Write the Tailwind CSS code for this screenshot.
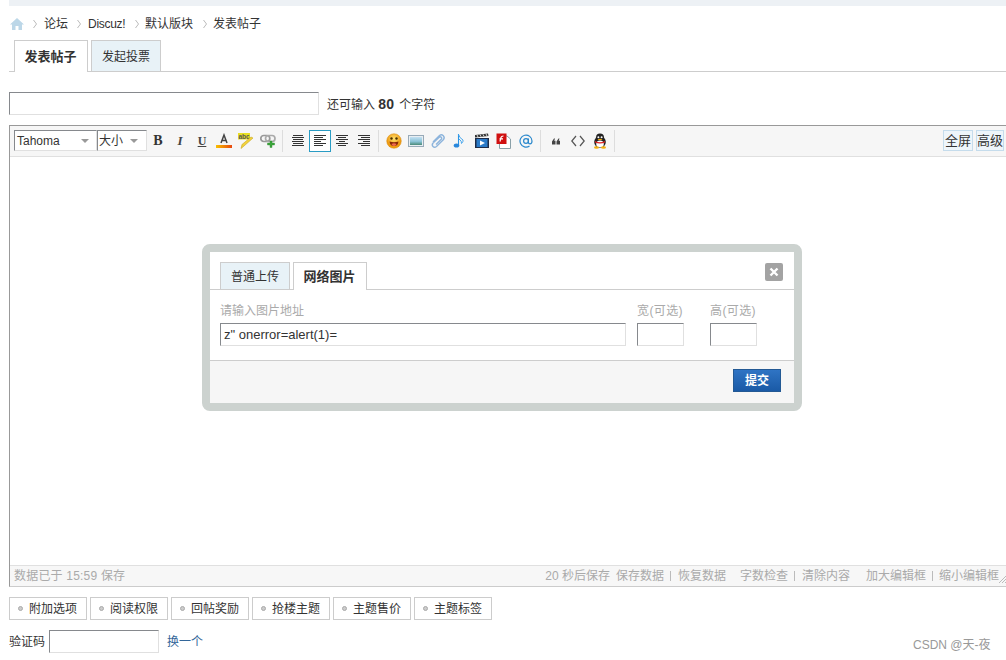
<!DOCTYPE html>
<html lang="zh">
<head>
<meta charset="utf-8">
<script src="https://cdn.jsdelivr.net/npm/@tailwindcss/browser@4"></script>
</head>
<body class="bg-white">
<div class="relative w-[1006px] h-[660px] overflow-hidden bg-white text-[12px] leading-[14px] text-[#333] font-['Liberation_Sans','Noto_Sans_CJK_SC',sans-serif]">

  <!-- top strip -->
  <div class="ml-[9px] h-[6px] bg-[#edf1f5]"></div>

  <!-- breadcrumb -->
  <div class="flex items-center h-[34px] pl-[10px] pt-[2px]">
    <svg class="w-[14px] h-[14px]" viewBox="0 0 14 14"><path d="M7 1 L14 7.5 L12 7.5 L12 13 L8.5 13 L8.5 9 L5.5 9 L5.5 13 L2 13 L2 7.5 L0 7.5 Z" fill="#bcd7e8"/></svg>
    <svg class="ml-[9px] mr-[7px] w-[4px] h-[10px]" viewBox="0 0 4 10"><path d="M0.5 1 L3.5 5 L0.5 9" fill="none" stroke="#bbb"/></svg>
    <span>论坛</span>
    <svg class="ml-[9px] mr-[7px] w-[4px] h-[10px]" viewBox="0 0 4 10"><path d="M0.5 1 L3.5 5 L0.5 9" fill="none" stroke="#bbb"/></svg>
    <span class="w-[37px] tracking-[-0.3px]">Discuz!</span>
    <svg class="ml-[10px] mr-[6px] w-[4px] h-[10px]" viewBox="0 0 4 10"><path d="M0.5 1 L3.5 5 L0.5 9" fill="none" stroke="#bbb"/></svg>
    <span>默认版块</span>
    <svg class="ml-[10px] mr-[6px] w-[4px] h-[10px]" viewBox="0 0 4 10"><path d="M0.5 1 L3.5 5 L0.5 9" fill="none" stroke="#bbb"/></svg>
    <span>发表帖子</span>
  </div>

  <!-- tabs -->
  <div class="ml-[9px] flex h-[32px] pl-[5px] gap-[3px] border-b border-[#cdcdcd]">
    <div class="w-[74px] h-[32px] flex items-center justify-center pt-[1px] pr-[1px] bg-white border border-b-0 border-[#cdcdcd] font-bold text-[13px]">发表帖子</div>
    <div class="w-[70px] h-[31px] flex items-center justify-center pt-[1px] bg-[#e8f2f7] border border-b-0 border-[#cdcdcd]">发起投票</div>
  </div>

  <!-- title -->
  <div class="flex items-center ml-[9px] mt-[20px] h-[23px] gap-[8px]">
    <div class="w-[310px] h-[23px] bg-white border border-t-[#86898d] border-l-[#86898d] border-r-[#e0e0e0] border-b-[#e0e0e0]"></div>
    <span class="mt-[2px]">还可输入 <b class="text-[14px] mr-[2px]">80</b> 个字符</span>
  </div>

  <!-- editor -->
  <div class="ml-[9px] mt-[10px] w-[1000px] h-[462px] flex flex-col border border-[#999] border-b-[#ccc] border-r-0">
    <!-- toolbar -->
    <div class="h-[31px] shrink-0 bg-[#f6f6f6] border-b border-[#e0e0e0] flex items-start pt-[4px] pl-[4px] pr-[5px]">
      <div class="w-[83px] h-[21px] flex items-center justify-between pl-[2px] pr-[7px] bg-white border border-t-[#86898d] border-l-[#86898d] border-r-[#e0e0e0] border-b-[#e0e0e0]">
        <span>Tahoma</span>
        <svg class="w-[8px] h-[4px]" viewBox="0 0 8 4"><path d="M0 0 H8 L4 4 Z" fill="#999"/></svg>
      </div>
      <div class="w-[50px] h-[21px] flex items-center justify-between pl-[1px] pr-[8px] bg-white border border-t-[#86898d] border-l-[#86898d] border-r-[#e0e0e0] border-b-[#e0e0e0]">
        <span>大小</span>
        <svg class="w-[8px] h-[4px]" viewBox="0 0 8 4"><path d="M0 0 H8 L4 4 Z" fill="#999"/></svg>
      </div>
      <!-- B I U A abc link -->
      <div class="w-[22px] h-[22px] flex items-center justify-center font-['Liberation_Serif',serif] font-bold text-[14px] text-[#333]">B</div>
      <div class="w-[22px] h-[22px] flex items-center justify-center font-['Liberation_Serif',serif] font-bold italic text-[13px] text-[#444]">I</div>
      <div class="w-[22px] h-[22px] flex items-center justify-center font-['Liberation_Serif',serif] font-bold underline text-[12px] text-[#444]">U</div>
      <div class="w-[22px] h-[22px] flex items-center justify-center">
        <svg class="w-[16px] h-[16px]" viewBox="0 0 16 16"><path d="M5 10 L8 2 L11 10 M6.2 7.5 H9.8" fill="none" stroke="#444" stroke-width="1.5"/><defs><linearGradient id="ga" x1="0" x2="1"><stop offset="0" stop-color="#f8c000"/><stop offset="1" stop-color="#e84810"/></linearGradient></defs><rect x="0" y="12" width="16" height="3" fill="url(#ga)"/></svg>
      </div>
      <div class="w-[22px] h-[22px] flex items-center justify-center">
        <svg class="w-[16px] h-[16px]" viewBox="0 0 16 16"><rect x="0" y="0" width="12" height="6.5" fill="#e8e020"/><text x="0.5" y="5.7" font-size="6.5" font-weight="bold" fill="#555" font-family="Liberation Sans">abc</text><path d="M15 5 L6 13 L3 15.5 L4 11.5 L13 4 Z" fill="#f2d23c" stroke="#c8a820" stroke-width="0.6"/></svg>
      </div>
      <div class="w-[22px] h-[22px] flex items-center justify-center">
        <svg class="w-[16px] h-[16px]" viewBox="0 0 16 16"><rect x="0.8" y="2.5" width="9" height="6" rx="3" fill="none" stroke="#999" stroke-width="1.7"/><rect x="5.5" y="2.5" width="9.5" height="6" rx="3" fill="none" stroke="#aaa" stroke-width="1.7"/><path d="M10 8 H12 V10 H14.5 V12 H12 V14.5 H10 V12 H7.5 V10 H10 Z" fill="#3aa53a" stroke="#2d8a2d" stroke-width="0.4"/></svg>
      </div>
      <div class="w-px h-[22px] bg-[#ddd] ml-[3px] mr-[4px]"></div>
      <!-- alignment -->
      <div class="w-[22px] h-[22px] flex items-center justify-center">
        <svg class="w-[14px] h-[14px]" viewBox="0 0 14 14"><path d="M2 1.5H12 M1 3.5H13 M2 5.5H12 M1 7.5H13 M2 9.5H12 M1 11.5H13" stroke="#333"/></svg>
      </div>
      <div class="w-[22px] h-[22px] flex items-center justify-center border border-[#2a9cc4] bg-white">
        <svg class="w-[14px] h-[14px]" viewBox="0 0 14 14"><path d="M1 1.5H13 M1 3.5H10 M1 5.5H13 M1 7.5H8 M1 9.5H13 M1 11.5H10" stroke="#333"/></svg>
      </div>
      <div class="w-[22px] h-[22px] flex items-center justify-center">
        <svg class="w-[14px] h-[14px]" viewBox="0 0 14 14"><path d="M1 1.5H13 M3 3.5H11 M1 5.5H13 M4 7.5H10 M1 9.5H13 M3 11.5H11" stroke="#333"/></svg>
      </div>
      <div class="w-[22px] h-[22px] flex items-center justify-center">
        <svg class="w-[14px] h-[14px]" viewBox="0 0 14 14"><path d="M1 1.5H13 M4 3.5H13 M1 5.5H13 M6 7.5H13 M1 9.5H13 M4 11.5H13" stroke="#333"/></svg>
      </div>
      <div class="w-px h-[22px] bg-[#ddd] ml-[3px] mr-[4px]"></div>
      <!-- smile -->
      <div class="w-[22px] h-[22px] flex items-center justify-center">
        <svg class="w-[16px] h-[16px]" viewBox="0 0 16 16"><defs><radialGradient id="gs" cx="0.5" cy="0.35"><stop offset="0" stop-color="#ffe070"/><stop offset="1" stop-color="#ee9a10"/></radialGradient></defs><circle cx="8" cy="8" r="7.3" fill="url(#gs)" stroke="#d88a10" stroke-width="0.5"/><circle cx="5.5" cy="5.5" r="1.2" fill="#4a3000"/><circle cx="10.5" cy="5.5" r="1.2" fill="#4a3000"/><path d="M3.5 8.5 Q8 10 12.5 8.5 Q12 13 8 13 Q4 13 3.5 8.5Z" fill="#8a2808"/><path d="M5.5 11 Q8 9.5 10.5 11 Q10 13 8 13 Q6 13 5.5 11Z" fill="#f06a50"/></svg>
      </div>
      <!-- image -->
      <div class="w-[22px] h-[22px] flex items-center justify-center">
        <svg class="w-[16px] h-[14px]" viewBox="0 0 16 14"><defs><linearGradient id="gi" x1="0" y1="0" x2="0" y2="1"><stop offset="0" stop-color="#c4e0f2"/><stop offset="0.55" stop-color="#8cc4d8"/><stop offset="1" stop-color="#4a8a78"/></linearGradient></defs><rect x="0.5" y="1.5" width="15" height="11" fill="#e8eef2" stroke="#98aab8"/><rect x="2" y="3" width="12" height="8" fill="url(#gi)"/></svg>
      </div>
      <!-- clip -->
      <div class="w-[22px] h-[22px] flex items-center justify-center">
        <svg class="w-[16px] h-[16px]" viewBox="0 0 16 16"><path d="M3 9 L9.5 2.5 Q11.5 1 13.3 2.7 Q15 4.5 13.5 6.5 L6.5 13.5 Q4.5 15 3 13.5 Q1.5 12 3 10 L9.5 4 Q10.5 3.5 11.5 4.5 Q12 5.5 11.5 6 L6 11.5" fill="none" stroke="#8db4dc" stroke-width="1.4"/></svg>
      </div>
      <!-- music -->
      <div class="w-[22px] h-[22px] flex items-center justify-center">
        <svg class="w-[16px] h-[16px]" viewBox="0 0 16 16"><path d="M6.5 1 V12" stroke="#2a94e4" stroke-width="1.1"/><ellipse cx="4.5" cy="12.5" rx="2.8" ry="2.1" fill="#2a88dc"/><path d="M6.5 1.5 Q7.5 5 11 7 Q11.5 8.5 9.5 10.5 Q10 8 7 6" fill="none" stroke="#4aa8ee" stroke-width="1"/></svg>
      </div>
      <!-- movie -->
      <div class="w-[22px] h-[22px] flex items-center justify-center">
        <svg class="w-[16px] h-[16px]" viewBox="0 0 16 16"><path d="M1 2 L14 0.5 L14.5 3 L1 4.5 Z" fill="#333"/><path d="M3 2 L4 4 M6 1.6 L7 3.7 M9 1.3 L10 3.3 M12 1 L13 3" stroke="#fff" stroke-width="0.8"/><rect x="1" y="5" width="14" height="10" fill="#1e2c48"/><rect x="2.5" y="6" width="11" height="8" fill="#2a7ac8"/><path d="M6 7.5 L11 10 L6 12.5Z" fill="#fff"/></svg>
      </div>
      <!-- flash -->
      <div class="w-[22px] h-[22px] flex items-center justify-center">
        <svg class="w-[16px] h-[16px]" viewBox="0 0 16 16"><path d="M3.5 3 H11 L14.5 6 V15.5 H3.5Z" fill="#fff" stroke="#8aa0a8"/><rect x="0.5" y="0.5" width="10" height="10.5" fill="#d01010"/><path d="M7.5 3 Q5 3 4.7 5.5 L4 8.5 M3.5 5.8 H7" fill="none" stroke="#fff" stroke-width="1.2"/></svg>
      </div>
      <!-- at -->
      <div class="w-[22px] h-[22px] flex items-center justify-center">
        <svg class="w-[14px] h-[14px]" viewBox="0 0 14 14"><circle cx="7" cy="7" r="2.4" fill="none" stroke="#2a88cc" stroke-width="1.2"/><path d="M9.4 4.5 V8.2 Q9.4 9.8 11 9.8 Q13 9.8 13 7 A6 6 0 1 0 10.5 12" fill="none" stroke="#2a88cc" stroke-width="1.2"/></svg>
      </div>
      <div class="w-px h-[22px] bg-[#ddd] ml-[3px] mr-[4px]"></div>
      <!-- quote -->
      <div class="w-[22px] h-[22px] flex items-center justify-center">
        <svg class="w-[8px] h-[7px]" viewBox="0 0 8 7"><path d="M0 6.5 V3.5 L2 0.5 H3 L2.2 2.8 H3.5 V6.5Z M4.5 6.5 V3.5 L6.5 0.5 H7.5 L6.7 2.8 H8 V6.5Z" fill="#444"/></svg>
      </div>
      <!-- code -->
      <div class="w-[22px] h-[22px] flex items-center justify-center">
        <svg class="w-[14px] h-[12px]" viewBox="0 0 14 12"><path d="M5 1 L0.8 6 L5 11 M9 1 L13.2 6 L9 11" fill="none" stroke="#555" stroke-width="1.2"/></svg>
      </div>
      <!-- qq -->
      <div class="w-[22px] h-[22px] flex items-center justify-center">
        <svg class="w-[16px] h-[16px]" viewBox="0 0 16 16"><ellipse cx="8" cy="9" rx="5.8" ry="6" fill="#222"/><ellipse cx="8" cy="4.8" rx="4" ry="4.2" fill="#222"/><ellipse cx="8" cy="11" rx="3.8" ry="3.6" fill="#fff"/><circle cx="6.4" cy="4.2" r="1" fill="#fff"/><circle cx="9.6" cy="4.2" r="1" fill="#fff"/><path d="M5.5 6.2 Q8 5.2 10.5 6.2 Q8 8 5.5 6.2Z" fill="#f4b010"/><path d="M3 8 Q8 10.5 13 8 L13 9.5 Q8 11.5 3 9.5Z" fill="#e02020"/><ellipse cx="4.5" cy="14.5" rx="2.5" ry="1.2" fill="#f4b010"/><ellipse cx="11.5" cy="14.5" rx="2.5" ry="1.2" fill="#f4b010"/></svg>
      </div>
      <div class="w-px h-[22px] bg-[#ddd] ml-[3px]"></div>
      <!-- right buttons -->
      <div class="ml-auto flex gap-[3px]">
        <div class="w-[30px] h-[21px] flex items-center justify-center bg-[#eef5fa] border border-[#c5dcec] text-[13px]">全屏</div>
        <div class="w-[28px] h-[21px] flex items-center justify-center bg-[#eef5fa] border border-[#c5dcec] text-[13px]">高级</div>
      </div>
    </div>
    <!-- body -->
    <div class="flex-1 bg-white"></div>
    <!-- status -->
    <div class="h-[21px] shrink-0 bg-[#f7f7f7] border-t border-[#e0e0e0] flex items-center pl-[4px] pr-[3px] text-[#aaa]">
      <span class="tracking-[0.2px]">数据已于 15:59 保存</span>
      <div class="ml-auto flex items-center">
        <span>20 秒后保存</span>
        <span class="ml-[6px]">保存数据</span>
        <span class="ml-[6px] mr-[7px] w-px h-[10px] bg-[#bbb]"></span>
        <span>恢复数据</span>
        <span class="ml-[14px]">字数检查</span>
        <span class="ml-[6px] mr-[7px] w-px h-[10px] bg-[#bbb]"></span>
        <span>清除内容</span>
        <span class="ml-[16px]">加大编辑框</span>
        <span class="ml-[6px] mr-[6px] w-px h-[10px] bg-[#bbb]"></span>
        <span>缩小编辑框</span>
        <svg class="w-[7px] h-[7px] mt-[6px]" viewBox="0 0 7 7"><path d="M0 7 L7 0 M3 7 L7 3 M6 7 L7 6" stroke="#bbb"/></svg>
      </div>
    </div>
  </div>

  <!-- options -->
  <div class="ml-[9px] mt-[10px] flex gap-[3px]">
    <div class="w-[78px] h-[23px] flex items-center pl-[8px] pt-[1px] border border-[#ccc]"><span class="w-[5px] h-[5px] -mt-[2px] rounded-full bg-[#ccc] border border-[#aaa] mr-[6px]"></span>附加选项</div>
    <div class="w-[78px] h-[23px] flex items-center pl-[8px] pt-[1px] border border-[#ccc]"><span class="w-[5px] h-[5px] -mt-[2px] rounded-full bg-[#ccc] border border-[#aaa] mr-[6px]"></span>阅读权限</div>
    <div class="w-[78px] h-[23px] flex items-center pl-[8px] pt-[1px] border border-[#ccc]"><span class="w-[5px] h-[5px] -mt-[2px] rounded-full bg-[#ccc] border border-[#aaa] mr-[6px]"></span>回帖奖励</div>
    <div class="w-[78px] h-[23px] flex items-center pl-[8px] pt-[1px] border border-[#ccc]"><span class="w-[5px] h-[5px] -mt-[2px] rounded-full bg-[#ccc] border border-[#aaa] mr-[6px]"></span>抢楼主题</div>
    <div class="w-[78px] h-[23px] flex items-center pl-[8px] pt-[1px] border border-[#ccc]"><span class="w-[5px] h-[5px] -mt-[2px] rounded-full bg-[#ccc] border border-[#aaa] mr-[6px]"></span>主题售价</div>
    <div class="w-[78px] h-[23px] flex items-center pl-[8px] pt-[1px] border border-[#ccc]"><span class="w-[5px] h-[5px] -mt-[2px] rounded-full bg-[#ccc] border border-[#aaa] mr-[6px]"></span>主题标签</div>
  </div>

  <!-- captcha -->
  <div class="ml-[9px] mt-[10px] flex items-center h-[23px]">
    <span class="w-[40px]">验证码</span>
    <div class="w-[110px] h-[23px] bg-white border border-t-[#86898d] border-l-[#86898d] border-r-[#e0e0e0] border-b-[#e0e0e0]"></div>
    <span class="ml-[8px] text-[#336699]">换一个</span>
  </div>

  <!-- watermark -->
  <div class="absolute left-[913px] top-[638px] text-[#999]">CSDN @天-夜</div>

  <!-- dialog -->
  <div class="absolute left-[202px] top-[244px] w-[600px] h-[167px] border-[8px] border-[#ccd2cf] rounded-[8px] bg-white flex flex-col">
    <div class="relative h-[38px] shrink-0 flex items-end pl-[10px] gap-[3px] border-b border-[#cdcdcd]">
      <div class="w-[70px] h-[27px] flex items-center justify-center pt-[2px] bg-[#e8f2f7] border border-b-0 border-[#cdcdcd]">普通上传</div>
      <div class="w-[74px] h-[28px] -mb-px flex items-center justify-center pt-[1px] pr-[1px] bg-white border border-b-0 border-[#cdcdcd] font-bold text-[13px]">网络图片</div>
      <div class="absolute left-[555px] top-[11px] w-[18px] h-[18px] rounded-[2px] bg-[#a3a3a3] flex items-center justify-center">
        <svg class="w-[10px] h-[10px]" viewBox="0 0 10 10"><path d="M1.5 1.5 L8.5 8.5 M8.5 1.5 L1.5 8.5" stroke="#fff" stroke-width="2.4"/></svg>
      </div>
    </div>
    <div class="h-[70px] shrink-0 pl-[10px] pt-[14px]">
      <div class="flex text-[#aaa] h-[14px]">
        <span class="w-[417px]">请输入图片地址</span>
        <span class="w-[73px] tracking-[0.4px]">宽(可选)</span>
        <span class="tracking-[0.4px]">高(可选)</span>
      </div>
      <div class="flex mt-[5px]">
        <div class="w-[406px] h-[23px] flex items-center pl-[3px] border border-t-[#86898d] border-l-[#86898d] border-r-[#e0e0e0] border-b-[#e0e0e0] text-[13px]">z" onerror=alert(1)=</div>
        <div class="ml-[11px] w-[47px] h-[23px] border border-t-[#86898d] border-l-[#86898d] border-r-[#e0e0e0] border-b-[#e0e0e0]"></div>
        <div class="ml-[26px] w-[47px] h-[23px] border border-t-[#86898d] border-l-[#86898d] border-r-[#e0e0e0] border-b-[#e0e0e0]"></div>
      </div>
    </div>
    <div class="flex-1 bg-[#f6f6f6] border-t border-[#cdcdcd] flex justify-end items-start pt-[8px] pr-[13px]">
      <div class="w-[48px] h-[23px] flex items-center justify-center bg-gradient-to-b from-[#2f74c4] to-[#1a5aa6] border border-[#235994] text-white font-bold">提交</div>
    </div>
  </div>
</div>
</body>
</html>
